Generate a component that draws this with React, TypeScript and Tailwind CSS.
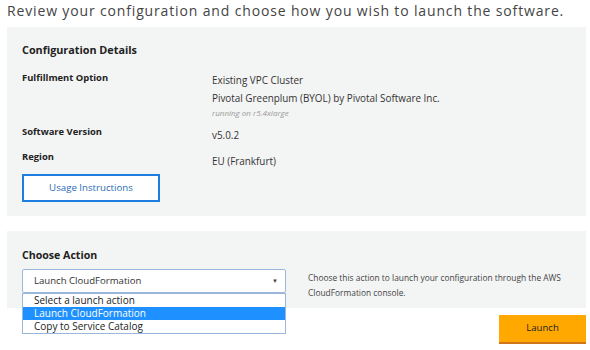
export default function App() {
  return (
    <div className="w-[590px] h-[350px] bg-white text-[#333] font-['Open_Sans',sans-serif] overflow-hidden">
      <p className="pl-[7px] pt-[1px] text-[14px] leading-[20px] tracking-[0.85px] text-[#444] whitespace-nowrap">
        Review your configuration and choose how you wish to launch the software.
      </p>

      {/* Configuration Details */}
      <section className="mt-[6px] ml-[7px] w-[579px] h-[189px] bg-[#f3f4f4] px-[15px] pt-[14px]">
        <h2 className="text-[10.8px] font-bold leading-[18px] text-[#222]">Configuration Details</h2>
        <div className="mt-[10px] grid grid-cols-[190px_1fr] text-[9.9px] leading-[18px]">
          <div className="text-[9.4px] font-bold text-[#222]">Fulfillment Option</div>
          <div className="pt-[2px]">
            <div>Existing VPC Cluster</div>
            <div>Pivotal Greenplum (BYOL) by Pivotal Software Inc.</div>
            <div className="text-[8px] italic text-[#999] leading-[11px]">running on r5.4xlarge</div>
          </div>
          <div className="mt-[5px] text-[9.4px] font-bold text-[#222]">Software Version</div>
          <div className="mt-[8px]">v5.0.2</div>
          <div className="mt-[4px] text-[9.4px] font-bold text-[#222]">Region</div>
          <div className="mt-[8px]">EU (Frankfurt)</div>
        </div>
        <button className="mt-[4px] w-[138px] h-[28px] border-2 border-[#1e7ee0] bg-white text-[9.7px] text-[#2b6cb5]">
          Usage Instructions
        </button>
      </section>

      {/* Choose Action */}
      <section className="mt-[15px] ml-[7px] w-[579px] h-[77px] bg-[#f3f4f4] px-[15px] pt-[15px] flex">
        <div className="w-[286px]">
          <h2 className="text-[10.6px] font-bold leading-[18px] text-[#222]">Choose Action</h2>
          <div className="relative mt-[5px] w-[264px]">
            <div className="h-[24px] border border-[#9ab8dc] rounded-[2px] bg-white flex items-center justify-between pl-[11px] pr-[7px] text-[9.6px]">
              <span>Launch CloudFormation</span>
              <span className="text-[6px] text-[#444]">▼</span>
            </div>
            <ul className="absolute left-0 top-[24px] w-[264px] border border-[#9ab8dc] bg-white text-[10px] leading-[13px] text-[#222]">
              <li className="pl-[11px]">Select a launch action</li>
              <li className="pl-[11px] bg-[#1e90ff] text-white">Launch CloudFormation</li>
              <li className="pl-[11px]">Copy to Service Catalog</li>
            </ul>
          </div>
        </div>
        <p className="pt-[24px] text-[8.4px] leading-[15px] text-[#444]">
          Choose this action to launch your configuration through the AWS
          <br />
          CloudFormation console.
        </p>
      </section>

      <div className="flex justify-end pr-[4px] mt-[7px]">
        <button className="w-[87px] h-[29px] bg-[#ffa800] border-b-2 border-[#d0761a] text-[9.6px] text-[#222]">
          Launch
        </button>
      </div>
    </div>
  );
}
